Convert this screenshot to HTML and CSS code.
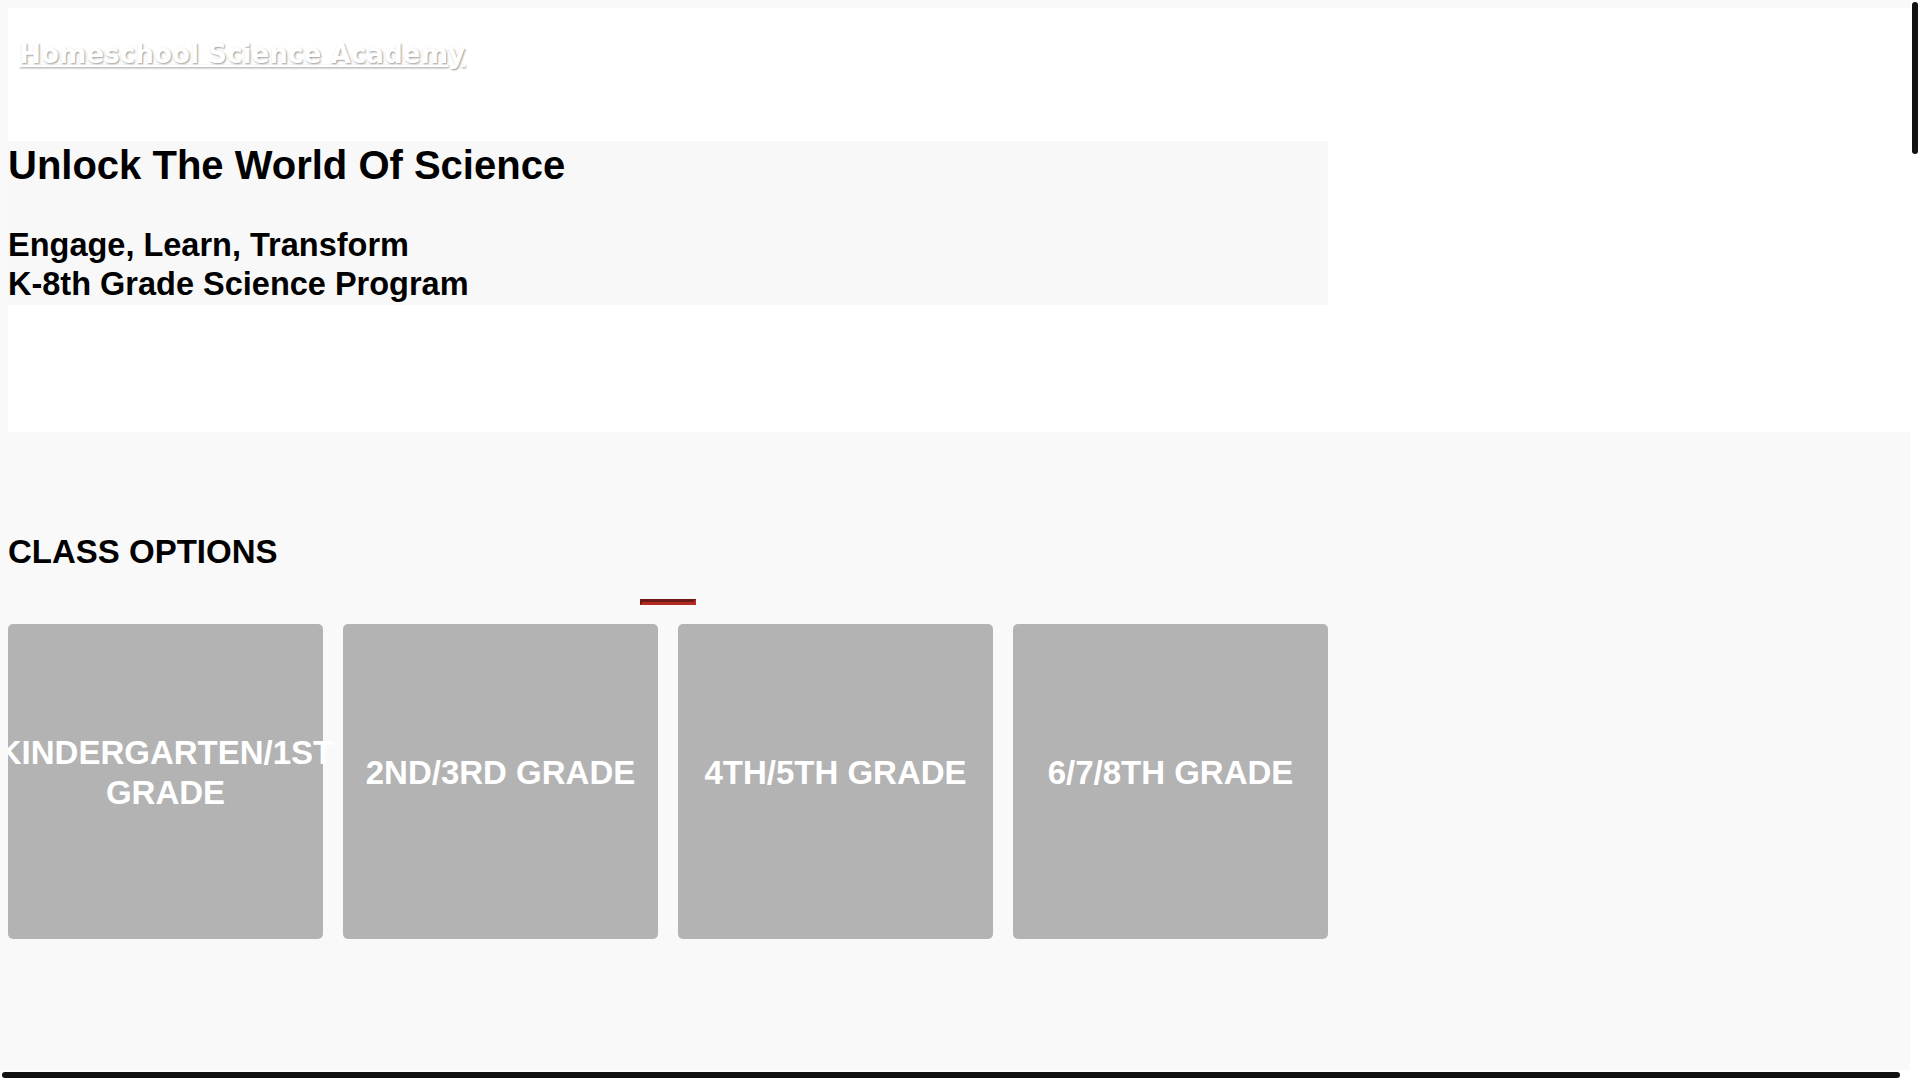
FILE: index.html
```html
<!DOCTYPE html>
<html lang="en">
<head>
    <meta charset="UTF-8">
    <meta name="viewport" content="width=device-width, initial-scale=1.0">
    <title>Homeschool Science Academy</title>
    <link rel="stylesheet" href="styles.css">
</head>
<body>
    <header class="site-header">
        <div class="brand"><a href="#" class="brand-link">Homeschool Science Academy</a></div>

        <div class="hero">
            <h1>Unlock The World Of Science</h1>
            <h2 class="tagline">Engage, Learn, Transform<br>K-8th Grade Science Program</h2>
        </div>
    </header>

    <section class="classes">
        <div class="classes-inner">
            <h2 class="section-title">CLASS OPTIONS</h2>
            <hr class="divider">

            <div class="class-grid">
                <div class="class-card">Kindergarten/1st Grade</div>
                <div class="class-card">2nd/3rd Grade</div>
                <div class="class-card">4th/5th Grade</div>
                <div class="class-card">6/7/8th Grade</div>
            </div>
        </div>
    </section>

    <!-- window scrollbars (black thumbs on white tracks) -->
    <div class="scrollbar scrollbar-v" aria-hidden="true"><span class="thumb"></span></div>
    <div class="scrollbar scrollbar-h" aria-hidden="true"><span class="thumb"></span></div>
</body>
</html>
```

FILE: styles.css
```css
/* base */
body {
    margin: 8px;
    background-color: #f9f9f9;
    font-family: "Liberation Sans", Arial, sans-serif;
    color: #000;
    overflow: hidden;
}

/* header + hero */
.site-header {
    background: #fff;
    width: calc(100vw - 8px);
    padding: 31px 0 127px;
    box-sizing: border-box;
}
.brand {
    padding-left: 11px;
    font-family: "DejaVu Sans", Verdana, sans-serif;
    font-size: 1.64em;
    font-weight: bold;
}
.brand-link {
    color: #fff;
    text-shadow: 1px 1px 2px rgba(0, 0, 0, 0.4);
}
.hero {
    max-width: 1320px;
    margin-top: 72px;
    padding-bottom: 1px;
    background: #f8f8f8;
}
.hero h1 {
    font-size: 40px;
    line-height: 48px;
    margin: 0 0 37px;
}
.tagline {
    font-size: 32.5px;
    line-height: 1.2;
    margin: 0;
}

/* class options */
.classes {
    padding: 100px 0;
}
.classes-inner {
    max-width: 1320px;
}
.section-title {
    font-size: 33px;
    line-height: 1.2;
    margin: 0;
}
.divider {
    width: 50px;
    height: 0;
    margin: 27px auto 19px;
    border-style: solid;
    border-width: 3px;
    border-color: #6d1a17 #b22a22 #b22a22 #6d1a17;
}
.class-grid {
    display: grid;
    grid-template-columns: repeat(4, 315px);
    gap: 20px;
}
.class-card {
    height: 315px;
    box-sizing: border-box;
    padding-bottom: 17px;
    display: flex;
    align-items: center;
    justify-content: center;
    text-align: center;
    background: #b3b3b3;
    border-radius: 5px;
    color: #fff;
    font-size: 33px;
    font-weight: bold;
    line-height: 1.2;
    text-transform: uppercase;
}

/* scrollbars */
.scrollbar {
    position: fixed;
    background: #fff;
    padding: 2px;
    box-sizing: border-box;
}
.scrollbar .thumb {
    display: block;
    background: #121212;
    border-radius: 3px;
}
.scrollbar-v {
    top: 0;
    right: 0;
    width: 10px;
    height: 100vh;
}
.scrollbar-v .thumb {
    width: 6px;
    height: 152px;
}
.scrollbar-h {
    left: 0;
    bottom: 0;
    width: calc(100vw - 10px);
    height: 10px;
}
.scrollbar-h .thumb {
    width: 1898px;
    height: 6px;
}
```
